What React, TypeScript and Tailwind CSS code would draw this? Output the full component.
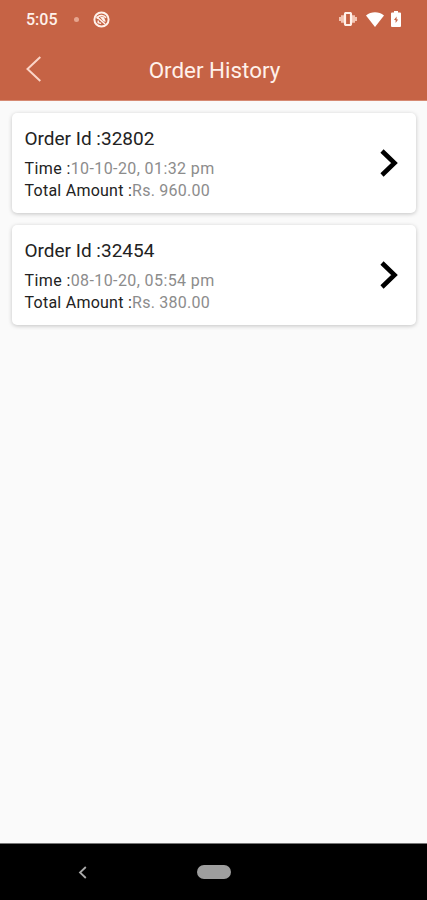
import React from 'react';

interface Order {
  id: string;
  time: string;
  amount: string;
}

const orders: Order[] = [
  { id: '32802', time: '10-10-20, 01:32 pm', amount: 'Rs. 960.00' },
  { id: '32454', time: '08-10-20, 05:54 pm', amount: 'Rs. 380.00' },
];

const StatusBar: React.FC = () => (
  <div className="flex h-[38px] items-center pl-[26px] pr-[26px] text-[#fff1ea]">
    <span className="w-[33px] whitespace-nowrap pt-[1px] text-[16px] font-medium leading-none">5:05</span>
    <span className="ml-[15px] h-[5px] w-[5px] rounded-full bg-[#e6a58f]" />
    <svg className="ml-[14px] h-[17px] w-[17px]" viewBox="0 0 17 17" fill="none">
      <circle cx="8.5" cy="8.5" r="7.1" stroke="currentColor" strokeWidth="2" />
      <path d="M4 7.6C5.6 4 10.4 3.4 13 6.8" stroke="currentColor" strokeWidth="1.6" />
      <path d="M6.6 5.6l4.4.6 1.8 4.6-2.2-.4z" fill="currentColor" />
      <path d="M3.5 5.6l8.6 7.4M5.2 9.4v2.2l3 .8" stroke="currentColor" strokeWidth="1.5" />
    </svg>
    <svg className="ml-auto h-[14px] w-[18px]" viewBox="0 0 18 14">
      <path d="M0 5h2.4v4H0zM2 3.2h3v7.6H2zM13 3.2h3v7.6h-3zM15.6 5H18v4h-2.4z" fill="#f4c4b2" />
      <rect x="6" y="1" width="6" height="12" rx="1" fill="none" stroke="currentColor" strokeWidth="2.2" />
    </svg>
    <svg className="ml-[9px] h-[15px] w-[18px]" viewBox="0 0 18 15">
      <path d="M0 3.6C5.2-.8 12.8-.8 18 3.6L9 15z" fill="#fff" />
    </svg>
    <svg className="ml-[7px] h-[16px] w-[10px]" viewBox="0 0 10 16">
      <path d="M3 0h4v1.6h2q1 0 1 1V15q0 1-1 1H1q-1 0-1-1V2.600q0-1 1-1h2z" fill="#fff" />
      <path d="M5.6 5.500L3 9h1.600v3L7.200 8.400H5.600z" fill="#c66345" />
    </svg>
  </div>
);

const Header: React.FC = () => (
  <header className="h-[101px] border-b border-[#d68a73] bg-[#c66345]">
    <StatusBar />
    <div className="grid h-[62px] grid-cols-[60px_1fr_60px] items-center">
      <button type="button" aria-label="Back" className="pl-[26px]">
        <svg className="h-[26px] w-[16px]" viewBox="0 0 16 26" fill="none">
          <path d="M14.300 1L1.500 13l12.800 12" stroke="#fbd5c8" strokeWidth="2" />
        </svg>
      </button>
      <h1 className="whitespace-nowrap pt-[2px] pl-[2px] text-center text-[22.400px] leading-none text-[#fff1ea]">Order History</h1>
    </div>
  </header>
);

const OrderCard: React.FC<{ order: Order }> = ({ order }) => (
  <li className="flex h-[100px] items-center justify-between rounded-[5px] bg-white pl-[12.500px] pr-[18px] shadow-[0_1px_4px_rgba(0,0,0,0.22)]">
    <div className="whitespace-nowrap pt-[3px] text-[16px] leading-[22.500px] text-[#222]">
      <h2 className="mb-[7px] text-[19px] leading-[24px]">Order Id :{order.id}</h2>
      <p className="tracking-[0.400px]">
        Time :<span className="text-[#8c8c8c]">{order.time}</span>
      </p>
      <p className="tracking-[0.250px]">
        Total Amount :<span className="text-[#8c8c8c]">{order.amount}</span>
      </p>
    </div>
    <svg className="h-[28px] w-[18px]" viewBox="0 0 18 28" fill="none">
      <path d="M2 2l12.500 12L2 26" stroke="#000" strokeWidth="4.600" />
    </svg>
  </li>
);

const App: React.FC = () => (
  <div className="flex h-[900px] w-[427px] flex-col overflow-hidden bg-[#fafafa] font-['Roboto',sans-serif]">
    <Header />
    <ul className="flex flex-1 flex-col gap-[12px] pl-[12px] pr-[11px] pt-[12px]">
      {orders.map((order) => (
        <OrderCard key={order.id} order={order} />
      ))}
    </ul>
    <nav className="grid h-[57px] grid-cols-3 items-center border-t border-[#777] bg-black">
      <svg className="ml-[78px] h-[13px] w-[9px]" viewBox="0 0 9 13" fill="none">
        <path d="M7.800 1L2 6.500 7.800 12" stroke="#aaa" strokeWidth="1.800" />
      </svg>
      <span className="ml-[1px] h-[14px] w-[34px] justify-self-center rounded-full bg-[#9e9e9e]" />
    </nav>
  </div>
);

export default App;
